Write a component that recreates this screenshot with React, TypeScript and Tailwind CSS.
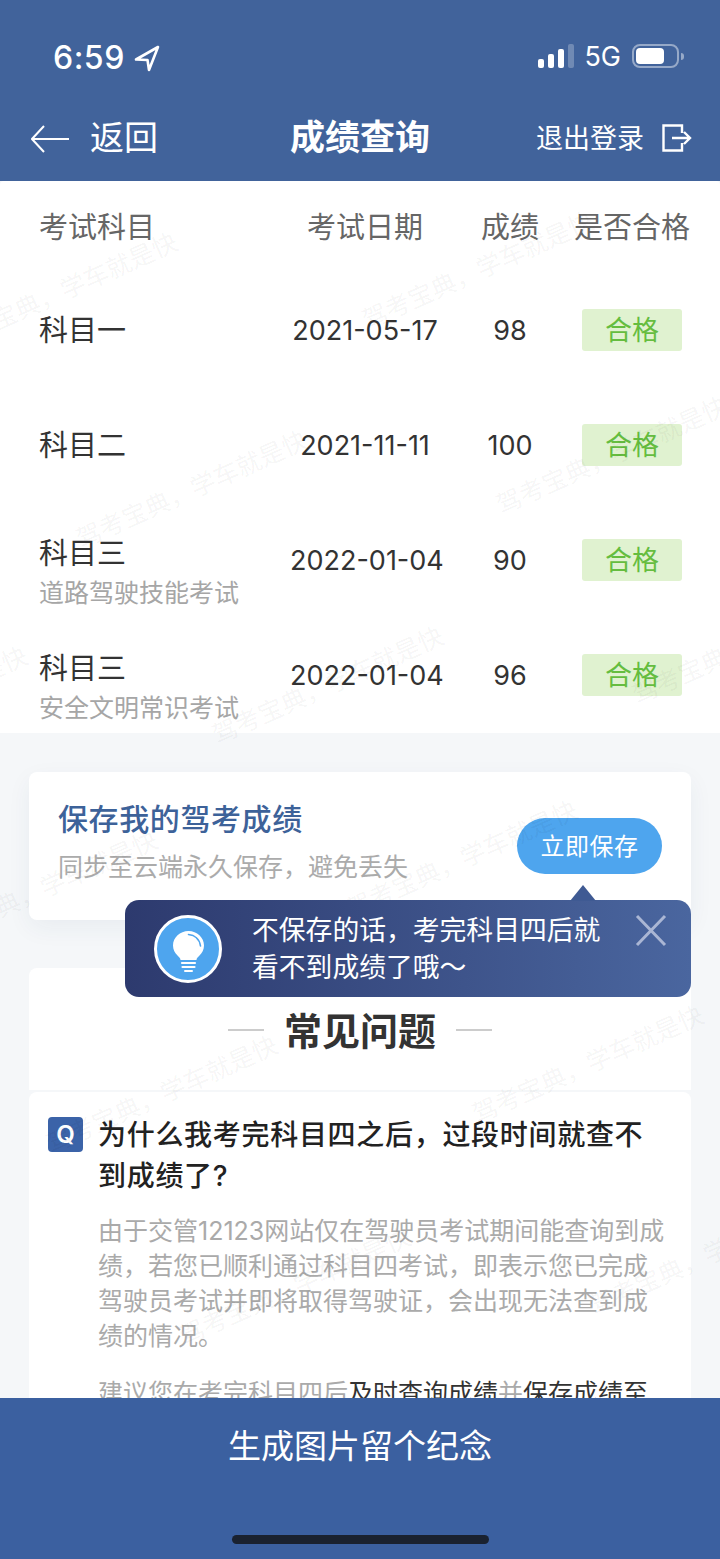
import React from "react";

const FONT = "font-['Inter','Noto_Sans_CJK_SC',sans-serif]";

type Row = { subject: string; note?: string; date: string; score: string };

const ROWS: Row[] = [
  { subject: "科目一", date: "2021-05-17", score: "98" },
  { subject: "科目二", date: "2021-11-11", score: "100" },
  { subject: "科目三", note: "道路驾驶技能考试", date: "2022-01-04", score: "90" },
  { subject: "科目三", note: "安全文明常识考试", date: "2022-01-04", score: "96" },
];

// centres of the repeated watermark text
const MARKS = [
  [62, 292], [478, 271], [192, 490], [612, 456], [328, 686], [748, 646], [-88, 706],
  [462, 860], [42, 890], [588, 1065], [162, 1095], [295, 1287], [705, 1257],
];

function Watermarks() {
  return (
    <div className="absolute inset-0 z-10 pointer-events-none overflow-hidden">
      {MARKS.map(([x, y]) => (
        <span
          key={`${x}-${y}`}
          className="absolute -translate-x-1/2 -translate-y-1/2 -rotate-[24deg] whitespace-nowrap text-[25px] text-black/[0.05]"
          style={{ left: x, top: y }}
        >
          驾考宝典，学车就是快
        </span>
      ))}
    </div>
  );
}

function StatusBar() {
  return (
    <div className="h-[114px] flex items-center justify-between pl-[53px] pr-[36px] pt-[2px] text-white">
      <div className="flex items-center gap-[9px]">
        <span className="text-[32px] font-medium leading-none tracking-[0.5px]">6:59</span>
        <svg width="26" height="27" viewBox="0 0 26 27" fill="none" stroke="white" strokeWidth="2.6" strokeLinejoin="round">
          <path d="M24 2 2 14.500l11.500.5 1.500 10z" />
        </svg>
      </div>
      <div className="flex items-center mb-[4px]">
        <div className="flex items-end gap-[4px] h-[24px]">
          <div className="w-[6px] h-[9px] rounded-[2px] bg-white" />
          <div className="w-[6px] h-[14px] rounded-[2px] bg-white" />
          <div className="w-[6px] h-[19px] rounded-[2px] bg-white" />
          <div className="w-[6px] h-[24px] rounded-[2px] bg-white/25" />
        </div>
        <span className="ml-[10px] text-[27px] leading-none">5G</span>
        <div className="ml-[11px] flex items-center">
          <div className="w-[47px] h-[24px] rounded-[8px] border-2 border-white/45 p-[2px]">
            <div className="w-[28px] h-full rounded-[4px] bg-white" />
          </div>
          <div className="ml-[2px] w-[3px] h-[7px] rounded-r bg-white/45" />
        </div>
      </div>
    </div>
  );
}

function NavBar() {
  return (
    <div className="relative h-[67px] flex items-start text-white">
      <div className="flex items-center pl-[31px] h-[50px]">
        <svg width="38" height="28" viewBox="0 0 38 28" fill="none" stroke="white" strokeWidth="2">
          <path d="M13 1 1 14l12 13M1 14h37" />
        </svg>
        <span className="ml-[21px] -mt-[2px] text-[34px] leading-none">返回</span>
      </div>
      <span className="absolute left-0 right-0 top-[1px] text-center text-[35px] font-semibold leading-[44px]">成绩查询</span>
      <div className="ml-auto flex items-center h-[50px] pr-[28px]">
        <span className="-mt-[2px] text-[27px] leading-none">退出登录</span>
        <svg className="ml-[18px] -mt-[2px]" width="30" height="28" viewBox="0 0 30 28" fill="none" stroke="white" strokeWidth="2.400">
          <path d="M20 9V1.500H1.500v25H20V19M10 14h18M22 8l6 6-6 6" />
        </svg>
      </div>
    </div>
  );
}

function ScoreTable() {
  return (
    <div className="bg-white pl-[39px] rounded-t-[4px]">
      <div className="grid grid-cols-[251px_150px_140px_104px] items-center h-[92px] pt-[2px] text-[29px] text-[#666]">
        <span className="whitespace-nowrap">考试科目</span>
        <span className="text-center whitespace-nowrap">考试日期</span>
        <span className="text-center whitespace-nowrap">成绩</span>
        <span className="flex justify-center whitespace-nowrap">是否合格</span>
      </div>
      {ROWS.map((row) => (
        <div key={row.note ?? row.subject} className="grid grid-cols-[251px_150px_140px_104px] items-center h-[115px]">
          <div className={row.note ? "flex flex-col pt-[24px]" : "flex flex-col"}>
            <span className="text-[29px] leading-[42px] text-[#333]">{row.subject}</span>
            {row.note && <span className="text-[25px] leading-[37px] text-[#a6a6a6] whitespace-nowrap">{row.note}</span>}
          </div>
          <span className="pt-[2px] text-center text-[27px] text-[#333] whitespace-nowrap">{row.date}</span>
          <span className="pt-[2px] text-center text-[27px] text-[#333]">{row.score}</span>
          <div className="flex justify-center mb-[2px]">
            <span className="w-[100px] h-[42px] rounded-[3px] bg-[#e0f2d0] text-[#65bd3f] text-[27px] leading-[44px] text-center">合格</span>
          </div>
        </div>
      ))}
    </div>
  );
}

function SaveCard() {
  return (
    <div className="mt-[39px] mx-[29px] h-[148px] bg-white rounded-[8px] shadow-[0_8px_24px_rgba(40,60,100,0.06)] flex justify-between pl-[29px] pr-[29px]">
      <div className="pt-[26px]">
        <div className="text-[30px] leading-[42px] font-medium text-[#3d6299] tracking-[0.6px] whitespace-nowrap">保存我的驾考成绩</div>
        <div className="mt-[9px] text-[25px] leading-[36px] text-[#ababab] whitespace-nowrap">同步至云端永久保存，避免丢失</div>
      </div>
      <div className="mt-[46px] w-[145px] h-[56px] rounded-full bg-[#4ea5ee] text-white text-[24px] tracking-[0.5px] leading-[58px] text-center">立即保存</div>
    </div>
  );
}

function Tip() {
  return (
    <div className="absolute z-20 left-[125px] top-[900px] w-[566px] h-[97px] rounded-[14px] bg-linear-to-r from-[#2d3a6e] to-[#4a669f] text-white">
      <div className="absolute left-[445px] -top-[15px] w-0 h-0 border-x-[13px] border-x-transparent border-b-[16px] border-b-[#3f5a93]" />
      <div className="absolute left-[29px] top-[15px] w-[68px] h-[68px] rounded-full border-[3px] border-white bg-[#4ea5ee] flex items-center justify-center">
        <svg className="mt-[4px]" width="31" height="41" viewBox="0 0 31 41" fill="none">
          <path d="M15.500 0C7 0 0 6.500 0 14.500c0 4.500 2 7.500 4.500 10 1.700 1.700 3 2.800 3 4.500h16c0-1.700 1.300-2.800 3-4.500 2.500-2.500 4.500-5.500 4.500-10C31 6.500 24 0 15.500 0z" fill="white" />
          <path d="M15.500 3.500c6 .5 11 4.500 12 11.500" stroke="#4ea5ee" strokeWidth="1.600" strokeLinecap="round" />
          <path d="M9 32h13M9.500 36h12" stroke="white" strokeWidth="2.200" strokeLinecap="round" />
          <path d="M12 40h7" stroke="white" strokeWidth="2" strokeLinecap="round" />
        </svg>
      </div>
      <div className="absolute left-[127px] top-[12px] text-[26.800px] leading-[37px] whitespace-nowrap">
        不保存的话，考完科目四后就
        <br />
        看不到成绩了哦～
      </div>
      <svg className="absolute left-[510px] top-[14px]" width="32" height="33" viewBox="0 0 32 33" fill="none" stroke="#aab6d4" strokeWidth="3">
        <path d="M2 2l28 29M30 2 2 31" />
      </svg>
    </div>
  );
}

function Faq() {
  return (
    <div className="mt-[48px] mx-[29px]">
      <div className="h-[122px] bg-white rounded-t-[8px] flex items-center justify-center pt-[4px]">
        <div className="w-[36px] h-[2px] bg-[#ccc] -mt-[2px]" />
        <span className="mx-[20px] text-[38px] font-semibold text-[#333] leading-none">常见问题</span>
        <div className="w-[36px] h-[2px] bg-[#ccc] -mt-[2px]" />
      </div>
      <div className="mt-[2px] bg-white rounded-t-[8px] pt-[21px] pl-[19px] pr-[16px] pb-[40px] flex items-start">
        <div className="mt-[4px] w-[35px] h-[35px] shrink-0 rounded-[4px] bg-[#3b63a8] text-white font-semibold text-[24px] leading-[35px] text-center">Q</div>
        <div className="ml-[15px] mt-[2px]">
          <div className="text-[28px] leading-[41px] font-medium text-[#222] tracking-[0.7px] whitespace-nowrap">
            为什么我考完科目四之后，过段时间就查不
            <br />
            到成绩了?
          </div>
          <div className="mt-[17px] text-[25px] leading-[35px] text-[#aaa] whitespace-nowrap">
            由于交管12123网站仅在驾驶员考试期间能查询到成
            <br />
            绩，若您已顺利通过科目四考试，即表示您已完成
            <br />
            驾驶员考试并即将取得驾驶证，会出现无法查到成
            <br />
            绩的情况。
          </div>
          <div className="mt-[22px] text-[25px] leading-[35px] text-[#aaa] whitespace-nowrap">
            建议您在考完科目四后<span className="text-[#333]">及时查询成绩</span>并<span className="text-[#333]">保存成绩至</span>
          </div>
        </div>
      </div>
    </div>
  );
}

export default function App() {
  return (
    <div className={`${FONT} relative w-[720px] h-[1559px] overflow-hidden flex flex-col bg-[#f5f7f9]`}>
      <div className="h-[181px] shrink-0 bg-[#41639b]">
        <StatusBar />
        <NavBar />
      </div>
      <div className="flex-1 min-h-0 overflow-hidden">
        <ScoreTable />
        <SaveCard />
        <Faq />
      </div>
      <div className="relative z-30 h-[161px] shrink-0 bg-[#3b60a0] flex flex-col items-center">
        <div className="mt-[26px] text-[33px] leading-[44px] text-white">生成图片留个纪念</div>
        <div className="mt-[67px] w-[257px] h-[9px] rounded-full bg-[#1a2230]" />
      </div>
      <Watermarks />
      <Tip />
    </div>
  );
}
